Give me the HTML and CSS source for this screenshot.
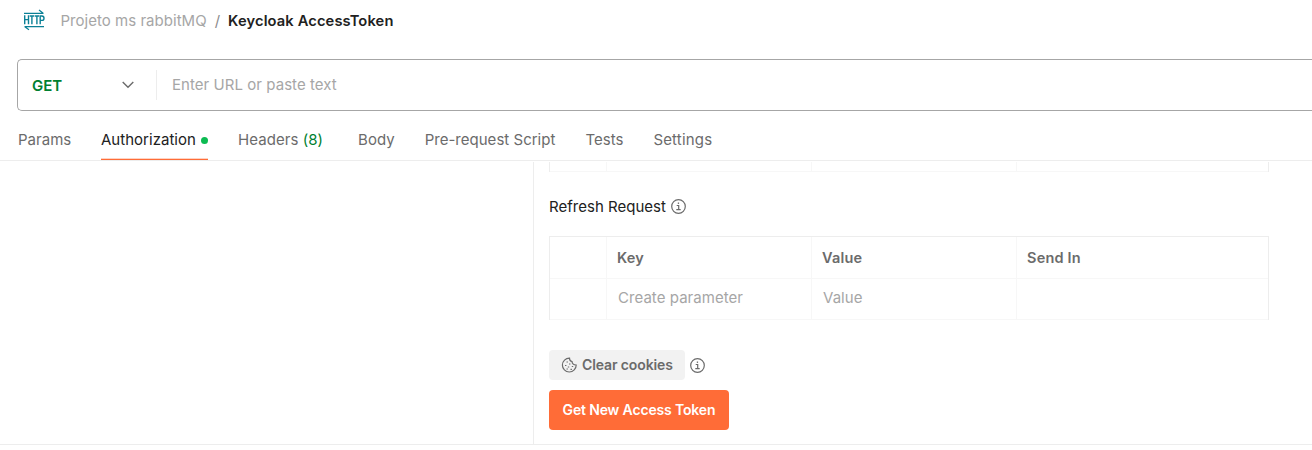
FILE: index.html
```html
<!DOCTYPE html>
<html lang="en">
<head>
<meta charset="utf-8">
<title>Keycloak AccessToken</title>
<link rel="stylesheet" href="styles.css">
</head>
<body>
<header class="breadcrumb">
  <svg class="http" width="22" height="22" viewBox="0 0 22 22" fill="none" stroke="#0b8096" stroke-width="1.2">
    <path d="M1 4.400h19.500M16 1l4.200 3.300M1.500 17.600H21M1.800 17.700 6 20.800"/>
    <path d="M1.700 6.300v9M5.500 6.300v9M1.700 10.600h3.800M6.700 7h4.400M8.900 7v8.300M11.700 7h4.400M13.900 7v8.300M17.200 15.300V7h1.700a2.100 2.200 0 0 1 0 4.400h-1.700" stroke-width="1.4"/>
  </svg>
  <span class="collection">Projeto ms rabbitMQ</span>
  <span class="slash">/</span>
  <span class="request-name">Keycloak AccessToken</span>
</header>
<div class="url-bar">
  <div class="method"><span>GET</span>
    <svg width="12" height="8" viewBox="0 0 12 8" fill="none" stroke="#6b6b6b" stroke-width="1.4"><path d="M.7 1 6 6.3 11.3 1"/></svg>
  </div>
  <div class="url">Enter URL or paste text</div>
</div>
<nav class="tabs">
  <a class="tab params">Params</a>
  <a class="tab active"><span>Authorization</span><i class="dot"></i></a>
  <a class="tab headers">Headers <span class="count">(8)</span></a>
  <a class="tab body-tab">Body</a>
  <a class="tab script">Pre-request Script</a>
  <a class="tab tests">Tests</a>
  <a class="tab settings">Settings</a>
</nav>
<main class="panel">
  <aside class="side"></aside>
  <section class="content">
    <div class="grid tail"><div></div><div></div><div></div><div></div></div>
    <h2 class="title"><span>Refresh Request</span>
      <svg width="15" height="15" viewBox="0 0 15 15" fill="none" stroke="#6b6b6b" stroke-width="1.2"><circle cx="7.5" cy="7.5" r="6.800"/><path d="M5.700 6.500h2v4.200M5.300 10.700h4.400"/><path d="M6.800 4.200h1.300" stroke-width="1.4"/></svg>
    </h2>
    <div class="grid params-table">
      <div></div><div class="th">Key</div><div class="th">Value</div><div class="th">Send In</div>
      <div></div><div class="td">Create parameter</div><div class="td">Value</div><div></div>
    </div>
    <div class="cookie-row">
      <button class="clear">
        <svg width="16" height="16" viewBox="0 0 16 16" fill="none" stroke="#6b6b6b" stroke-width="1.200"><path d="M8.500 1.200C8.500 3 9.200 4.200 11 4.500 11.200 6.800 12.700 8 15.200 8A6.900 6.900 0 1 1 8.500 1.200z"/><path d="M5.500 5h1.400M8 7h1.400M4 8.500h1.400M6.800 10H8.200M10.800 9.500h1.400M5.500 12h1.400M9.500 12.300h1.400"/></svg>
        <span>Clear cookies</span>
      </button>
      <svg width="15" height="15" viewBox="0 0 15 15" fill="none" stroke="#6b6b6b" stroke-width="1.2"><circle cx="7.5" cy="7.5" r="6.800"/><path d="M5.700 6.500h2v4.200M5.300 10.700h4.400"/><path d="M6.800 4.200h1.300" stroke-width="1.4"/></svg>
    </div>
    <button class="token">Get New Access Token</button>
  </section>
</main>
</body>
</html>
```
FILE: styles.css
```css
* { box-sizing: border-box; }
body { margin: 0; height: 450px; overflow: hidden; background: #fff; color: #6b6b6b; font: 15px/20px Inter, sans-serif; }
svg { display: block; flex: none; }
.breadcrumb { display: flex; height: 59px; padding: 9px 0 0 23px; white-space: nowrap; }
.breadcrumb span { margin-top: 2px; }
.collection { margin-left: 15.500px; color: #a6a6a6; letter-spacing: .03px; }
.slash { margin-left: 8px; color: #8c8c8c; }
.request-name { margin-left: 8px; color: #212121; font-weight: 600; font-size: 14.700px; letter-spacing: .12px; }
.url-bar { display: flex; align-items: center; height: 52px; margin-left: 17px; border: 1px solid #a6a6a6; border-right: 0; border-radius: 5px 0 0 5px; }
.method { display: flex; align-items: center; justify-content: space-between; width: 139px; height: 30px; padding: 2px 22px 0 14px; border-right: 1px solid #ededed; color: #007f31; font-weight: 600; }
.method svg { margin-top: -2px; }
.url { padding-left: 15px; color: #a6a6a6; letter-spacing: .05px; }
.tabs { display: flex; height: 50px; padding: 19px 0 0 18px; border-bottom: 1px solid #ededed; white-space: nowrap; letter-spacing: .02px; }
.tab { height: 30px; margin-right: 30px; }
.params { width: 53px; }
.active { display: flex; width: 107px; border-bottom: 1px solid #ff6c37; box-shadow: inset 0 -1px #ffd3c3; color: #212121; }
.dot { width: 7px; height: 7px; margin: 7px 0 0 auto; border-radius: 50%; background: #0cbb52; }
.headers { margin-right: 35px; letter-spacing: .06px; }
.settings { letter-spacing: .18px; }
.count { color: #007f31; }
.panel { display: flex; height: 284px; border-bottom: 1px solid #ededed; }
.side { width: 534px; margin-top: 1px; border-right: 1px solid #ededed; }
.content { padding-left: 15px; }
.grid { display: grid; grid-template-columns: 57px 205px 205px 251px; width: 720px; border-left: 1px solid #ededed; border-right: 1px solid #ededed; }
.grid > div { border-bottom: 1px solid #f7f7f7; border-right: 1px solid #f7f7f7; }
.grid > div:nth-child(4n) { border-right: 0; }
.tail { grid-template-rows: 10px; margin-top: 1px; }
.title { display: flex; gap: 5px; margin: 25px 0 19px; color: #212121; font: 15px/20px Inter, sans-serif; letter-spacing: .02px; }
.title svg { margin-top: 2px; }
.params-table { grid-template-rows: 42px 41px; border-top: 1px solid #ededed; }
.th { padding: 11px 0 0 10px; font-weight: 600; font-size: 14.500px; letter-spacing: .2px; }
.td { padding: 9px 0 0 11px; color: #a6a6a6; letter-spacing: .05px; }
.cookie-row { display: flex; align-items: center; gap: 5px; margin: 30px 0 10px; }
button { border: 0; font: 600 14px/20px Inter, sans-serif; white-space: nowrap; }
.clear { display: flex; align-items: center; gap: 5px; width: 136px; height: 30px; padding: 0 0 0 12px; border-radius: 4px; background: #f2f2f2; color: #6b6b6b; letter-spacing: -.12px; }
.token { display: block; width: 180px; height: 40px; padding: 0; border-radius: 4px; background: #ff6c37; color: #fff; letter-spacing: -.15px; }
```
